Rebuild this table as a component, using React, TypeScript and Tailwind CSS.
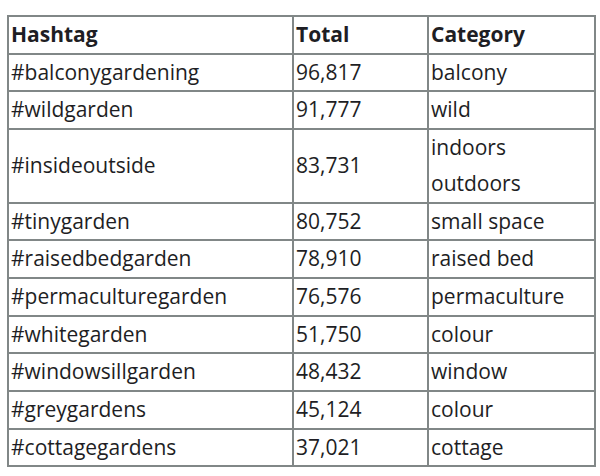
import React from 'react';

interface Row {
  tag: string;
  total: string;
  category: string[];
}

const rows: Row[] = [
  { tag: '#balconygardening', total: '96,817', category: ['balcony'] },
  { tag: '#wildgarden', total: '91,777', category: ['wild'] },
  { tag: '#insideoutside', total: '83,731', category: ['indoors', 'outdoors'] },
  { tag: '#tinygarden', total: '80,752', category: ['small space'] },
  { tag: '#raisedbedgarden', total: '78,910', category: ['raised bed'] },
  { tag: '#permaculturegarden', total: '76,576', category: ['permaculture'] },
  { tag: '#whitegarden', total: '51,750', category: ['colour'] },
  { tag: '#windowsillgarden', total: '48,432', category: ['window'] },
  { tag: '#greygardens', total: '45,124', category: ['colour'] },
  { tag: '#cottagegardens', total: '37,021', category: ['cottage'] },
];

const cell = 'border-2 border-[#818787] px-[2px] py-0 text-left align-middle leading-[35.7px]';

export default function App() {
  return (
    <div className="w-[600px] h-[476px] bg-white pt-[15px] pl-[7px] font-['Open_Sans',sans-serif] text-[21px] text-[#1e1e24]">
      <table className="border-collapse table-fixed w-[587px]">
        <colgroup>
          <col className="w-[285px]" />
          <col className="w-[135px]" />
          <col className="w-[167px]" />
        </colgroup>
        <thead>
          <tr>
            <th className={`${cell} font-bold`}>Hashtag</th>
            <th className={`${cell} font-bold`}>Total</th>
            <th className={`${cell} font-bold`}>Category</th>
          </tr>
        </thead>
        <tbody>
          {rows.map((row) => (
            <tr key={row.tag}>
              <td className={cell}>{row.tag}</td>
              <td className={cell}>{row.total}</td>
              <td className={cell}>
                {row.category.map((c) => (
                  <div key={c}>{c}</div>
                ))}
              </td>
            </tr>
          ))}
        </tbody>
      </table>
    </div>
  );
}
